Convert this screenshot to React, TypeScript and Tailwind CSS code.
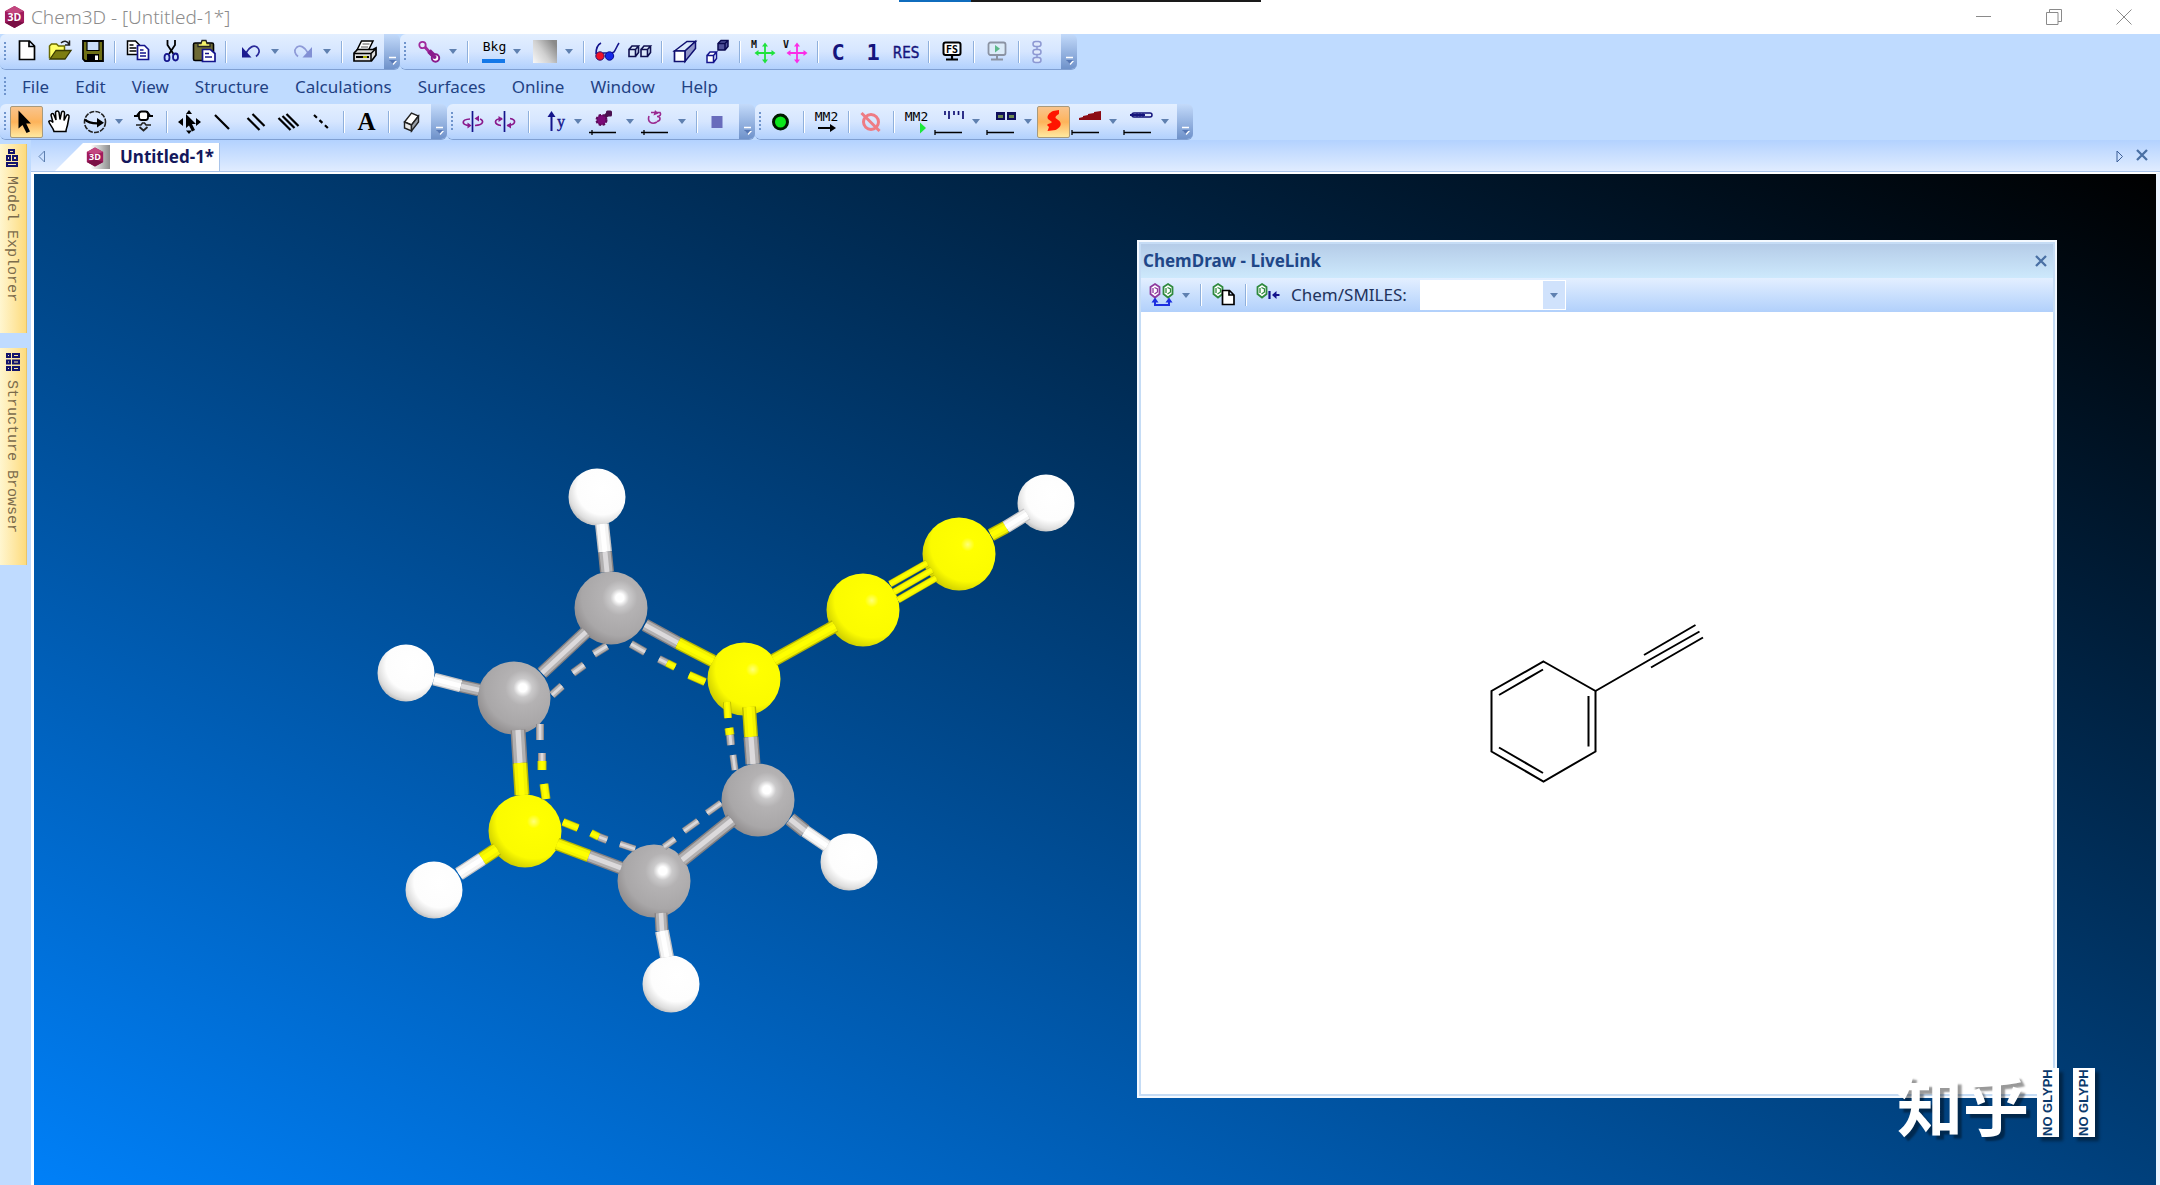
import type { ReactNode } from 'react';

type Point = [number, number];

const NAVY = '#14148c';
const PURPLE = '#8a1a8c';

/* ---------- Icon primitives ---------- */

function Ico({ children }: { children: ReactNode }) {
    return (
        <svg viewBox="0 0 24 24" className="h-6 w-6 shrink-0 overflow-visible" fill="none" aria-hidden="true">
            {children}
        </svg>
    );
}

function Logo({ className }: { className: string }) {
    return (
        <svg viewBox="0 0 22 24" className={className} aria-hidden="true">
            <path d="M11 0.5 21 6v12l-10 5.5L1 18V6z" fill="#a01a5c" />
            <path d="M11 0.5 21 6 11 9 1 6z" fill="#c2477f" />
            <path d="M1 18 11 15l10 3-10 5.5z" fill="#7a0f45" />
            <text x="11" y="16" textAnchor="middle" fontSize="11" fontWeight="700" fill="#fff" fontFamily="'Open Sans', sans-serif">
                3D
            </text>
        </svg>
    );
}

function Caret() {
    return (
        <svg viewBox="0 0 8 5" className="h-[5px] w-2 shrink-0" aria-hidden="true">
            <path d="M0 0h8L4 5z" fill="#5f80b0" />
        </svg>
    );
}

/** Thin scale line drawn under the popup slider icons */
function ScaleLine({ tick = -5 }: { tick?: number }) {
    return <path d={`M-5 22.5H22M${tick} 20v5`} stroke="#000" strokeWidth="1.3" />;
}

function Hexagon({ x, color }: { x: number; color: string }) {
    return (
        <g stroke={color}>
            <path d={`M${x} 1l4.5 3v7L${x} 14.5l-4.5-3.5V4z`} fill="#fff" strokeWidth="1.8" />
            <path d={`M${x - 2} 5v5M${x - 0.5} 11l3-2v-3l-3-1.5`} strokeWidth="1.3" />
        </g>
    );
}

/* ---------- Toolbar icons ---------- */

const icons: Record<string, ReactNode> = {
    New: <path d="M4.5 1h10l5 5v13.5h-15zM14 1v5.5h5.5" fill="#fff" stroke="#000" strokeWidth="1.7" />,
    Open: (
        <>
            <path d="M1.5 18.5V6l2-2h5l2 2h6v4" fill="#ffff66" stroke="#6b6b00" strokeWidth="1.5" />
            <path d="M2 19 8 10.5h15L17 19z" fill="#7d7d10" stroke="#3a3a00" strokeWidth="1.3" />
            <path d="M13 3c3-3 6-2 8 1M21.5 0.5V5H17" stroke="#222" strokeWidth="1.5" />
        </>
    ),
    Save: (
        <>
            <path d="M2 1h20v20H4l-2-2z" fill="#6f7015" stroke="#000" strokeWidth="1.8" />
            <path d="M6 1.5h12v9H6z" fill="#c9dcf7" stroke="#000" strokeWidth="1.2" />
            <path d="M6 14h12v7H6z" fill="#000" />
            <path d="M14 15.5h3v4.5h-3z" fill="#fff" />
        </>
    ),
    Copy: (
        <>
            <path d="M1.5 1h8l4 4v9.5h-12z" fill="#fff" stroke="#000" strokeWidth="1.5" />
            <path d="M3.5 5h4M3.5 8h7M3.5 11h7" stroke="#000" strokeWidth="1.4" />
            <path d="M11.5 5.5h7l4 4v10h-11z" fill="#fff" stroke={NAVY} strokeWidth="1.7" />
            <path d="M14 10h3.5M14 13h6M14 16h6" stroke={NAVY} strokeWidth="1.4" />
        </>
    ),
    Cut: (
        <>
            <path d="M8.5 0v5l6 9M16 0v5l-6 9" stroke="#000" strokeWidth="1.8" />
            <ellipse cx="8" cy="17.5" rx="2.5" ry="3.7" stroke={NAVY} strokeWidth="1.8" />
            <ellipse cx="16.5" cy="17" rx="2.5" ry="3.5" stroke={NAVY} strokeWidth="1.8" />
        </>
    ),
    Paste: (
        <>
            <rect x="1.5" y="3" width="20" height="17.5" rx="1.5" fill="#6d6a35" stroke="#000" strokeWidth="1.6" />
            <path d="M6 6.5V3.5h3l1-3h4l1 3h3v3z" fill="#f5f36b" stroke="#222" strokeWidth="1.3" />
            <path d="M10.5 9.5h8l4.5 4v8H10.5z" fill="#fff" stroke={NAVY} strokeWidth="1.7" />
            <path d="M13 13.5h4M13 17h7" stroke={NAVY} strokeWidth="1.5" />
        </>
    ),
    Undo: (
        <>
            <path d="M7 13C10 7 15 4.5 18.5 7.5c3 3 1.5 6.5-1.5 9" stroke="#2b2b9a" strokeWidth="1.7" />
            <path d="M3 7v10.5h9.5z" fill="#1c1c90" />
        </>
    ),
    Redo: (
        <>
            <path d="M17 13C14 7 9 4.5 5.5 7.5c-3 3-1.5 6.5 1.5 9" stroke="#8f9bd8" strokeWidth="1.7" />
            <path d="M21 7v10.5h-9.5z" fill="#8290d4" />
        </>
    ),
    Print: (
        <>
            <path d="M4 10 8.5 1H20l-4.5 9z" fill="#fff" stroke="#000" strokeWidth="1.5" />
            <path d="M9.5 4h7M8 7h7" stroke="#555" strokeWidth="1.2" />
            <path d="M1 13l3.5-3.5H20l3-1.5v7l-4.5 6H1z" fill="#ddd" stroke="#000" strokeWidth="1.7" />
            <path d="M1 13.5h17v7.5M18 13.5l5-5" stroke="#000" strokeWidth="1.5" />
            <path d="M3 17h13" stroke="#000" strokeWidth="2" />
            <path d="M10 17h4" stroke="#e8e800" strokeWidth="1.6" />
        </>
    ),
    'Display mode': (
        <>
            <path d="m7 6 9 10" stroke="#a02a9c" strokeWidth="3" />
            <path d="m12 11 7 7" stroke={PURPLE} strokeWidth="5" />
            <circle cx="5.5" cy="5" r="3.2" fill="#e6eefc" stroke="#a02a9c" strokeWidth="1.8" />
            <circle cx="18.5" cy="18" r="3.7" fill="#fff" stroke={PURPLE} strokeWidth="2" />
            <circle cx="17.5" cy="17" r="2" fill={PURPLE} />
        </>
    ),
    'Background color': (
        <>
            <text x="13.5" y="11" textAnchor="middle" fontSize="13" fill="#000" fontFamily="'DejaVu Sans Mono', monospace">
                Bkg
            </text>
            <rect x="1" y="19" width="23" height="4" fill="#1478e8" />
        </>
    ),
    'Background effect': (
        <>
            <defs>
                <linearGradient id="effect" x1="0" y1="1" x2="1" y2="0.3">
                    <stop offset="0" stopColor="#f8f8f8" />
                    <stop offset="0.5" stopColor="#d0d0d0" />
                    <stop offset="1" stopColor="#8a8a8a" />
                </linearGradient>
            </defs>
            <rect width="24" height="23" fill="url(#effect)" />
        </>
    ),
    'Red and blue stereo': (
        <>
            <path d="M1 14C1 8 2 5 6 3M15 14l4-2c2-3 3-6 5-9" stroke={NAVY} strokeWidth="1.6" />
            <path d="M8 13h4" stroke={NAVY} strokeWidth="1.5" />
            <circle cx="5" cy="16" r="4.2" fill="#f01028" stroke="#30106c" />
            <circle cx="14.5" cy="16" r="4.2" fill="#1428e8" stroke="#0a0a90" />
        </>
    ),
    'Stereo pairs': (
        <>
            {[0, 12].map((dx) => (
                <path
                    key={dx}
                    d={`M${dx + 1} 9.5h6.5v7H${dx + 1}zM${dx + 1} 9.5l3-3.5h6.5l-3 3.5M${dx + 10.5} 6v6.5l-3 4`}
                    fill="#dbe8fb"
                    stroke="#101050"
                    strokeWidth="1.6"
                />
            ))}
        </>
    ),
    Perspective: (
        <>
            <path d="M1.5 11 14 1.5h8.5L12 11z" fill="#dbe8fb" stroke="#101070" strokeWidth="1.5" />
            <path d="M12 11 22.5 1.5v7L12 21.5z" fill="#8f94c8" stroke="#101070" strokeWidth="1.5" />
            <path d="M1.5 11H12v10.5H1.5z" fill="#fff" stroke="#101070" strokeWidth="1.7" />
        </>
    ),
    'Depth fading': (
        <>
            <path d="M12 3.5 15 0.5h7v6L19 10h-7z" fill="#50529a" stroke="#0a0a50" strokeWidth="1.5" />
            <path d="M12 3.5h7V10M19 3.5l3-3" stroke="#0a0a50" strokeWidth="1.5" />
            <path d="M1 15.5h6.5v7H1zM1 15.5l3-3.5h6.5l-3 3.5M10.5 12v6.5l-3 4" fill="#fff" stroke={NAVY} strokeWidth="1.5" />
        </>
    ),
    'Model axes': (
        <>
            <text x="0" y="7.5" fontSize="10" fontWeight="700" fill="#111" fontFamily="'DejaVu Sans Mono', monospace">
                M
            </text>
            <path d="M14 4v18M5 13h18" stroke="#1fe23c" strokeWidth="1.8" />
            <path d="M14 2.5l3 4h-6zM14 23.5l3-4h-6zM3.5 13l4-3v6zM24.5 13l-4-3v6z" fill="#1fe23c" />
        </>
    ),
    'View axes': (
        <>
            <text x="-1" y="7.5" fontSize="10" fontWeight="700" fill="#111" fontFamily="'DejaVu Sans Mono', monospace">
                V
            </text>
            <path d="M13 4v18M4 13h18" stroke="#fb2ce6" strokeWidth="1.8" />
            <path d="M13 2.5l3 4h-6zM13 23.5l3-4h-6zM2.5 13l4-3v6zM23.5 13l-4-3v6z" fill="#fb2ce6" />
        </>
    ),
    'Element symbols': (
        <text x="9" y="20" textAnchor="middle" fontSize="22" fontWeight="700" fill="#14147c" fontFamily="'DejaVu Sans Mono', monospace">
            C
        </text>
    ),
    'Serial numbers': (
        <text x="11" y="20" textAnchor="middle" fontSize="22" fontWeight="700" fill="#14147c" fontFamily="'DejaVu Sans Mono', monospace">
            1
        </text>
    ),
    'Residue labels': (
        <text x="11" y="18" textAnchor="middle" fontSize="15" fill="#14147c" stroke="#14147c" strokeWidth="0.4" fontFamily="'Liberation Sans Narrow', 'DejaVu Sans Condensed', sans-serif">
            RES
        </text>
    ),
    'Full screen': (
        <>
            <rect x="3.5" y="2.5" width="17" height="12.5" rx="2" fill="#fff" stroke="#000" strokeWidth="2" />
            <path d="M12 15v4M6 19.5h12" stroke="#000" strokeWidth="2.2" />
            <text x="12" y="12.5" textAnchor="middle" fontSize="10" fontWeight="700" fill="#000" fontFamily="'DejaVu Sans Mono', monospace">
                FS
            </text>
        </>
    ),
    Demo: (
        <>
            <rect x="3.5" y="2.5" width="17" height="12.5" rx="2" fill="#dcebf8" stroke="#8b93a3" strokeWidth="1.8" />
            <path d="M12 15v4M6 19.5h12" stroke="#8b93a3" strokeWidth="2" />
            <path d="M10 5v7.5l5-3.7z" fill="#5cb888" />
        </>
    ),
    Chain: (
        <g stroke="#8d98d2" strokeWidth="1.5" fill="#dfe9fb">
            <rect x="3" y="1.5" width="8" height="5" rx="2.5" />
            <rect x="3" y="9.5" width="8" height="5" rx="2.5" />
            <rect x="3" y="17.5" width="8" height="5" rx="2.5" />
            <path d="M7 6.5v3M7 14.5v3" />
        </g>
    ),
    Select: <path d="M3.500 0.5v18l4-3.5 4 8 3.5-1.5-3.800-8H16z" fill="#000" />,
    Translate: (
        <path
            d="M6 21.5C5 17 1 14 0.8 11.5c1-1.5 3-.5 4.2 1L3 5c.5-2 2.5-2 3 0l2 5-.5-7.5c.5-2 3-2 3.5 0l1 7 1.5-7c.5-2 3-1.5 3 .5l-.5 7.5 2.5-5c1-1.5 3-.5 2.5 1.5l-1.5 8c-.5 2.5-1.5 4-1.5 6.5z"
            fill="#fff"
            stroke="#000"
            strokeWidth="1.5"
        />
    ),
    Rotate: (
        <>
            <circle cx="12" cy="12" r="10.5" stroke="#222" strokeWidth="1.6" strokeDasharray="5 1.2" />
            <path d="M2 9.5c3 3.5 8 4 14 3.8" stroke="#000" strokeWidth="2.4" />
            <path d="M14 8l7 4.8-7 4.7z" fill="#000" />
        </>
    ),
    Zoom: (
        <>
            <path d="M1 6h5M15 6h5" stroke="#000" strokeWidth="2" />
            <path d="M4 5 7.5 1.5M17 5 13.5 1.5" stroke="#000" strokeWidth="1.6" />
            <rect x="6" y="1.5" width="9" height="8.5" rx="2.5" fill="#fff" stroke="#000" strokeWidth="1.8" />
            <path d="M3 15h5l1.500-2h2l1.500 2h5" stroke="#222" strokeWidth="1.6" />
            <path d="M6.500 17l4 3.500 4-3.500" stroke="#222" strokeWidth="1.8" />
        </>
    ),
    Move: (
        <>
            <path d="M8 4v14l3-2.5 3 6 3-1.5-3-6h4z" fill="#000" />
            <path d="M11 0l3 4H8zM0 12l5-4v8zM23 12l-5-4v8zM11 24l3-3.5H8z" fill="#000" />
        </>
    ),
    'Single bond': <path d="m4 5 14 14" stroke="#000" strokeWidth="2.2" />,
    'Double bond': <path d="m3.500 8 12 12M8.500 4l12 12" stroke="#000" strokeWidth="2.2" />,
    'Triple bond': <path d="m1.500 8 12 12M5.500 6l12 12M9.500 4l12 12" stroke="#000" strokeWidth="2.2" />,
    'Uncoordinated bond': <path d="m4 5 16 15" stroke="#000" strokeWidth="2.2" strokeDasharray="4 3.5" />,
    'Build from text': (
        <text x="11.5" y="20" textAnchor="middle" fontSize="25" fontWeight="700" fill="#000" fontFamily="'Liberation Serif', serif">
            A
        </text>
    ),
    Eraser: (
        <>
            <path d="m4.500 12 7-9 7 3-7 9z" fill="#fff" stroke="#222" strokeWidth="1.4" />
            <path d="m4.500 12 7 3v6l-7-3z" fill="#e8e8e8" stroke="#222" strokeWidth="1.4" />
            <path d="m11.500 15 7-9v6l-7 9z" fill="#9aa0a8" stroke="#222" strokeWidth="1.4" />
        </>
    ),
    'Spin about Y': (
        <>
            <path d="M10.5 1v21" stroke={NAVY} strokeWidth="1.7" />
            <path d="M8 9c-9 .5-9 6 0 6.5M13 15.5c9-.5 9-5 5-6.5" stroke={PURPLE} strokeWidth="1.7" />
            <path d="M17 5.5v6l-4.5-3z" fill={PURPLE} />
            <path d="M5.5 12.5v6l4-3z" fill={PURPLE} />
        </>
    ),
    'Spin selected': (
        <>
            <path d="M9.5 1v21" stroke={NAVY} strokeWidth="1.7" />
            <path d="M7 8.5c-9 .5-8 6-1 7M12 15.5c10-.5 9-6 3-7" stroke={PURPLE} strokeWidth="1.7" />
            <path d="M3.5 6v6l4.5-3z" fill={PURPLE} />
            <path d="M16 12.5v6l-4.5-3z" fill={PURPLE} />
        </>
    ),
    'Rotate about axis': (
        <>
            <path d="M9.5 4v17" stroke={NAVY} strokeWidth="2" />
            <path d="M9.5 1l4 6h-8z" fill={NAVY} />
            <text x="15" y="17" fontSize="16" fill={NAVY} stroke={NAVY} strokeWidth="0.4" fontFamily="'Liberation Serif', serif">
                y
            </text>
        </>
    ),
    'Sphere size': (
        <>
            <path d="m7 10 8-7" stroke="#4a104c" strokeWidth="4" />
            <rect x="12" y="0.5" width="6" height="6" rx="1.5" fill="#4a1050" />
            <circle cx="7.5" cy="10" r="5" fill="#7a0a78" stroke="#5a0a58" strokeWidth="2" strokeDasharray="2.5 1.5" />
            <ScaleLine tick={-2} />
        </>
    ),
    'Dihedral speed': (
        <>
            <path d="M3 6c-2 6 3 9 8 6" stroke="#9a2a90" strokeWidth="1.6" />
            <path d="M5 2.500h9c1.500 2 0 4-3 4 4 0 4 4 0 5" stroke="#9a2a90" strokeWidth="1.6" />
            <path d="m9 0-1.500 5.500 5-2z" fill="#9a2a90" />
            <ScaleLine tick={-2} />
        </>
    ),
    Stop: <rect x="3.5" y="6" width="11" height="12" fill="#686cbc" />,
    Record: <circle cx="10.5" cy="12" r="7" fill="#0ce81c" stroke="#001a00" strokeWidth="3" />,
    'Minimize energy': (
        <>
            <text x="11.5" y="10.5" textAnchor="middle" fontSize="13" fill="#000" fontFamily="'DejaVu Sans Mono', monospace">
                MM2
            </text>
            <path d="M3 18h14" stroke="#000" strokeWidth="2" />
            <path d="M15 14l6 4-6 4z" fill="#000" />
        </>
    ),
    'Stop calculation': (
        <>
            <circle cx="11" cy="12" r="7.5" stroke="#ee7c84" strokeWidth="3" />
            <path d="m1.5 3 18 18" stroke="#ee7c84" strokeWidth="3" />
        </>
    ),
    'Run dynamics': (
        <>
            <text x="11.5" y="10.5" textAnchor="middle" fontSize="13" fill="#000" fontFamily="'DejaVu Sans Mono', monospace">
                MM2
            </text>
            <path d="M15 12.5v11l6-5.5z" fill="#1be83a" />
        </>
    ),
    'Frame interval': (
        <>
            <path d="M5 1v4M9 1v8M14 1v4M18.5 1v4M23 1v8" stroke="#101074" strokeWidth="1.7" />
            <ScaleLine />
        </>
    ),
    'Movie frames': (
        <>
            <path d="M4 2h9v8H4zM15 2h9v8h-9z" fill="#10105c" />
            <path d="M6 5h5v3H6zM17 5h5v3h-5z" fill="#6e8a50" />
            <ScaleLine />
        </>
    ),
    'Heating mode': (
        <path
            d="M17 0 11 1C7 3 4.5 6 6 9l4 3c-1 1.5-4 1.5-5 3l2 2-1.5 4 8-1c4-2 7-5 4-9l-4-3c0-3 3-3 3.5-4.5z"
            fill="#ff1400"
        />
    ),
    'Heating rate': (
        <>
            <path d="M2 10V8l4-1V6l5-1V4l6-1V2l7-1v9z" fill="#8c0c14" />
            <ScaleLine />
        </>
    ),
    Temperature: (
        <>
            <rect x="3" y="3" width="20" height="4" rx="2" fill="#dfe9fb" stroke="#14147c" strokeWidth="1.5" />
            <path d="M1 5h15" stroke="#14147c" strokeWidth="2.2" />
            <path d="M8 3v4M11 3v4M14 3v4" stroke="#14147c" />
            <ScaleLine />
        </>
    ),
    'Link mode': (
        <>
            <Hexagon x={5} color="#8e3a9e" />
            <Hexagon x={18} color="#2f8a3e" />
            <path d="M5 17v5h14v-5" stroke="#1c2ee0" strokeWidth="2" />
            <path d="M5 14.5l3.5 5h-7zM19 14.5l3.5 5h-7z" fill="#1c2ee0" />
        </>
    ),
    'Copy to ChemDraw': (
        <>
            <Hexagon x={6} color="#2f8a3e" />
            <path d="M10.5 7.5h7l4.5 4.5v9.5H10.5zM17 7.5V12h5" fill="#fff" stroke="#000" strokeWidth="1.7" />
        </>
    ),
    'Add to Chem3D': (
        <>
            <Hexagon x={5} color="#2f8a3e" />
            <path d="M12.5 8v8M16 12h6.5" stroke="#14148c" strokeWidth="2.2" />
            <path d="M19.5 8v8L15 12z" fill="#14148c" />
        </>
    ),
};

/* ---------- Toolbars ---------- */

/** '|' is a separator */
type Item = '|' | { name: string; menu?: boolean; pressed?: boolean };

const b = (name: string): Item => ({ name });
const m = (name: string): Item => ({ name, menu: true });
const p = (name: string): Item => ({ name, pressed: true });

const standardBar: Item[] = [
    b('New'), b('Open'), b('Save'), '|', b('Copy'), b('Cut'), b('Paste'), '|', m('Undo'), m('Redo'), '|', b('Print'),
];
const displayBar: Item[] = [
    m('Display mode'), '|', m('Background color'), m('Background effect'), '|', b('Red and blue stereo'), b('Stereo pairs'), '|',
    b('Perspective'), b('Depth fading'), '|', b('Model axes'), b('View axes'), '|', b('Element symbols'), b('Serial numbers'),
    b('Residue labels'), '|', b('Full screen'), '|', b('Demo'), '|', b('Chain'),
];
const buildingBar: Item[] = [
    p('Select'), b('Translate'), m('Rotate'), b('Zoom'), '|', b('Move'), b('Single bond'), b('Double bond'), b('Triple bond'),
    b('Uncoordinated bond'), '|', b('Build from text'), '|', b('Eraser'),
];
const demoBar: Item[] = [
    b('Spin about Y'), b('Spin selected'), '|', m('Rotate about axis'), m('Sphere size'), m('Dihedral speed'), '|', b('Stop'),
];
const calculationBar: Item[] = [
    b('Record'), '|', b('Minimize energy'), '|', b('Stop calculation'), '|', b('Run dynamics'), m('Frame interval'),
    m('Movie frames'), p('Heating mode'), m('Heating rate'), m('Temperature'),
];

const menus = ['File', 'Edit', 'View', 'Structure', 'Calculations', 'Surfaces', 'Online', 'Window', 'Help'];

function Grip() {
    return <span className="mx-1 h-5 w-0.5 shrink-0 bg-[repeating-linear-gradient(#6f94cc_0_2px,transparent_2px_4px)]" />;
}

function ToolItem({ item }: { item: Item }) {
    if (item === '|') {
        return <span className="mx-[5px] h-[22px] w-0.5 shrink-0 border-r border-l border-r-white border-l-[#8fb0dc]" />;
    }
    if (item.menu) {
        return (
            <button type="button" aria-label={item.name} className="flex h-8 w-[52px] shrink-0 items-center gap-2 pl-[7px]">
                <Ico>{icons[item.name]}</Ico>
                <Caret />
            </button>
        );
    }
    return (
        <button
            type="button"
            aria-label={item.name}
            className={
                item.pressed
                    ? 'flex h-8 w-[33px] shrink-0 items-center justify-center rounded-[2px] border border-[#a89a7c] bg-linear-to-b from-[#f9c48c] via-[#fdb35a] to-[#fee9a0]'
                    : 'flex h-8 w-[33px] shrink-0 items-center justify-center'
            }
        >
            <Ico>{icons[item.name]}</Ico>
        </button>
    );
}

function Toolbar({ label, items }: { label: string; items: Item[] }) {
    return (
        <div role="toolbar" aria-label={label} className="flex h-9 overflow-hidden rounded-md border-b border-[#7f9fd2]">
            <div className="flex items-center bg-linear-to-b from-[#e3efff] via-[#d6e6ff] to-[#b1d0fd] pr-[3px]">
                <Grip />
                {items.map((item, i) => (
                    <ToolItem key={i} item={item} />
                ))}
            </div>
            <button
                type="button"
                aria-label={`${label} options`}
                className="flex w-4 shrink-0 items-end justify-center bg-linear-to-b from-[#c3dafa] to-[#6f92ca] pb-1"
            >
                <svg viewBox="0 0 9 9" className="h-[9px] w-[9px]" aria-hidden="true">
                    <path d="M1 1.5h7" stroke="#fff" strokeWidth="1.5" />
                    <path d="M2 5h7L5.5 9z" fill="#fff" />
                    <path d="M1 4h7L4.5 8z" fill="#5577b5" />
                </svg>
            </button>
        </div>
    );
}

/* ---------- Molecule ---------- */

type Element = 'carbon' | 'picked' | 'hydrogen';

const shades: Record<Element, [string, string, string]> = {
    carbon: ['#858182', '#b2b0b1', '#dcdadc'],
    picked: ['#b9b900', '#f4f400', '#ffff00'],
    hydrogen: ['#c4c4c6', '#f4f4f4', '#ffffff'],
};

const atoms: { at: Point; kind: Element }[] = [
    { at: [597, 497], kind: 'hydrogen' },
    { at: [406, 673], kind: 'hydrogen' },
    { at: [434, 890], kind: 'hydrogen' },
    { at: [671, 984], kind: 'hydrogen' },
    { at: [849, 862], kind: 'hydrogen' },
    { at: [1046, 503], kind: 'hydrogen' },
    { at: [611, 608], kind: 'carbon' },
    { at: [514, 698], kind: 'carbon' },
    { at: [654, 881], kind: 'carbon' },
    { at: [758, 800], kind: 'carbon' },
    { at: [525, 831], kind: 'picked' },
    { at: [744, 679], kind: 'picked' },
    { at: [863, 610], kind: 'picked' },
    { at: [959, 554], kind: 'picked' },
];

const bonds: { from: Point; to: Point; kind: Element; width: number }[] = [
    { from: [602, 524], to: [605, 552], kind: 'hydrogen', width: 14 },
    { from: [605, 552], to: [607, 572], kind: 'carbon', width: 14 },
    { from: [645, 625], to: [678, 643], kind: 'carbon', width: 13 },
    { from: [678, 643], to: [713, 661], kind: 'picked', width: 13 },
    { from: [586, 632], to: [542, 673], kind: 'carbon', width: 13 },
    { from: [434, 679], to: [461, 686], kind: 'hydrogen', width: 13 },
    { from: [461, 686], to: [479, 690], kind: 'carbon', width: 13 },
    { from: [518, 730], to: [520, 763], kind: 'carbon', width: 15 },
    { from: [520, 763], to: [522, 795], kind: 'picked', width: 15 },
    { from: [497, 849], to: [482, 859], kind: 'picked', width: 14 },
    { from: [482, 859], to: [459, 874], kind: 'hydrogen', width: 14 },
    { from: [557, 844], to: [589, 856], kind: 'picked', width: 13 },
    { from: [589, 856], to: [621, 868], kind: 'carbon', width: 13 },
    { from: [661, 913], to: [662, 931], kind: 'carbon', width: 13 },
    { from: [662, 931], to: [667, 957], kind: 'hydrogen', width: 14 },
    { from: [682, 860], to: [732, 820], kind: 'carbon', width: 14 },
    { from: [749, 707], to: [751, 737], kind: 'picked', width: 14 },
    { from: [751, 737], to: [753, 764], kind: 'carbon', width: 15 },
    { from: [790, 819], to: [805, 831], kind: 'carbon', width: 14 },
    { from: [805, 831], to: [827, 846], kind: 'hydrogen', width: 13 },
    { from: [774, 660], to: [835, 626], kind: 'picked', width: 13 },
    { from: [890, 584], to: [927, 563], kind: 'picked', width: 7 },
    { from: [894, 592], to: [932, 570], kind: 'picked', width: 7 },
    { from: [898, 600], to: [936, 578], kind: 'picked', width: 7 },
    { from: [991, 535], to: [1006, 527], kind: 'picked', width: 13 },
    { from: [1006, 527], to: [1027, 514], kind: 'hydrogen', width: 13 },
    // inner aromatic dashes
    { from: [607, 646], to: [594, 654], kind: 'carbon', width: 8 },
    { from: [584, 665], to: [573, 673], kind: 'carbon', width: 8 },
    { from: [562, 686], to: [552, 695], kind: 'carbon', width: 8 },
    { from: [631, 644], to: [645, 652], kind: 'carbon', width: 8 },
    { from: [659, 659], to: [667, 663], kind: 'carbon', width: 8 },
    { from: [667, 663], to: [675, 667], kind: 'picked', width: 8 },
    { from: [689, 675], to: [705, 682], kind: 'picked', width: 8 },
    { from: [540, 724], to: [540, 740], kind: 'carbon', width: 8 },
    { from: [542, 753], to: [542, 761], kind: 'carbon', width: 8 },
    { from: [542, 761], to: [542, 770], kind: 'picked', width: 9 },
    { from: [544, 784], to: [546, 799], kind: 'picked', width: 9 },
    { from: [563, 822], to: [578, 828], kind: 'picked', width: 8 },
    { from: [591, 833], to: [599, 837], kind: 'picked', width: 8 },
    { from: [599, 837], to: [607, 840], kind: 'carbon', width: 8 },
    { from: [620, 844], to: [635, 849], kind: 'carbon', width: 7 },
    { from: [675, 839], to: [664, 847], kind: 'carbon', width: 7 },
    { from: [698, 821], to: [684, 831], kind: 'carbon', width: 7 },
    { from: [721, 803], to: [707, 813], kind: 'carbon', width: 7 },
    { from: [727, 702], to: [728, 718], kind: 'picked', width: 8 },
    { from: [729, 728], to: [730, 735], kind: 'picked', width: 9 },
    { from: [730, 735], to: [731, 745], kind: 'carbon', width: 8 },
    { from: [733, 755], to: [735, 770], kind: 'carbon', width: 7 },
];

/** Cylinder shaded across its width: dark rim, body, highlight */
function Bond({ from, to, kind, width }: { from: Point; to: Point; kind: Element; width: number }) {
    const [dark, body, light] = shades[kind];
    const line = { x1: from[0], y1: from[1], x2: to[0], y2: to[1] };
    return (
        <g>
            <line {...line} stroke={dark} strokeWidth={width} />
            <line {...line} stroke={body} strokeWidth={width * 0.8} />
            <line {...line} stroke={light} strokeWidth={width * 0.35} />
        </g>
    );
}

function Molecule() {
    return (
        <svg viewBox="34 174 1100 1000" className="absolute top-0 left-0 h-[1000px] w-[1100px]" role="img" aria-label="Ball and stick model">
            <defs>
                <radialGradient id="carbon" cx="0.62" cy="0.36" r="0.8">
                    <stop offset="0" stopColor="#ffffff" />
                    <stop offset="0.07" stopColor="#ffffff" />
                    <stop offset="0.16" stopColor="#cbcacb" />
                    <stop offset="0.3" stopColor="#b4b2b3" />
                    <stop offset="0.65" stopColor="#a9a7a8" />
                    <stop offset="0.85" stopColor="#908d8e" />
                    <stop offset="1" stopColor="#666262" />
                </radialGradient>
                <radialGradient id="picked" cx="0.62" cy="0.37" r="0.78">
                    <stop offset="0" stopColor="#ffff78" />
                    <stop offset="0.12" stopColor="#ffff00" />
                    <stop offset="0.65" stopColor="#fbfb00" />
                    <stop offset="0.85" stopColor="#d0d000" />
                    <stop offset="1" stopColor="#8a8a00" />
                </radialGradient>
                <radialGradient id="hydrogen" cx="0.6" cy="0.36" r="0.75">
                    <stop offset="0" stopColor="#ffffff" />
                    <stop offset="0.6" stopColor="#fdfdfd" />
                    <stop offset="0.8" stopColor="#dedede" />
                    <stop offset="1" stopColor="#9c9c9c" />
                </radialGradient>
            </defs>
            {atoms.map(({ at, kind }) => (
                <circle key={at.join()} cx={at[0]} cy={at[1]} r={kind === 'hydrogen' ? 28.5 : 36.5} fill={`url(#${kind})`} />
            ))}
            {bonds.map((bond, i) => (
                <Bond key={i} {...bond} />
            ))}
        </svg>
    );
}

/* ---------- LiveLink window ---------- */

function Phenylacetylene() {
    return (
        <svg viewBox="1460 600 280 200" className="mt-72 ml-[319px] h-[200px] w-[280px]" role="img" aria-label="Structure drawing">
            <g stroke="#000" strokeWidth="2" fill="none">
                <path d="M1543.5 661.5 1595.5 691v60.5l-52 30-52-30V691z" />
                <path d="M1499 695l44-25.5M1499 747.5l44 25.5M1588.5 696v50.5" />
                <path d="M1595.5 691l52-30 52-29.5M1644 655l51.5-30M1651 667.5l52-30" />
            </g>
        </svg>
    );
}

function CloseCross() {
    return (
        <svg viewBox="0 0 12 12" className="h-3 w-3" aria-hidden="true">
            <path d="M1 1l10 10M11 1 1 11" stroke="#4a70a4" strokeWidth="2.3" />
        </svg>
    );
}

function LiveLink() {
    return (
        <section
            aria-label="ChemDraw - LiveLink"
            className="absolute top-[66px] right-[99px] flex h-[858px] w-[920px] flex-col border-2 border-[#f4f9ff] bg-[#c5dcf5] p-0.5"
        >
            <header className="flex h-[34px] shrink-0 items-center justify-between bg-linear-to-b from-[#b5cce8] to-[#cde9fc] pr-1.5 pl-0.5">
                <h2 className="text-[17px] leading-5 font-bold text-[#1f4788]">ChemDraw - LiveLink</h2>
                <button type="button" aria-label="Close LiveLink">
                    <CloseCross />
                </button>
            </header>
            <div className="flex h-[34px] shrink-0 items-center bg-linear-to-b from-[#e3efff] to-[#b1d0fb] pl-0.5">
                <ToolItem item={m('Link mode')} />
                <ToolItem item="|" />
                <ToolItem item={b('Copy to ChemDraw')} />
                <ToolItem item="|" />
                <ToolItem item={b('Add to Chem3D')} />
                <label htmlFor="smiles" className="ml-1.5 w-[129px] text-[17px] leading-5 text-[#22335c]">
                    Chem/SMILES:
                </label>
                <div className="flex h-[30px] border border-white bg-white">
                    <input id="smiles" type="text" className="w-[122px] bg-white px-1 text-[17px] outline-none" />
                    <button type="button" aria-label="Recent SMILES" className="flex w-[22px] items-center justify-center bg-[#d0e2fc]">
                        <Caret />
                    </button>
                </div>
            </div>
            <div className="flex-1 bg-white">
                <Phenylacetylene />
            </div>
        </section>
    );
}

/* ---------- Page ---------- */

function Watermark() {
    return (
        <div className="absolute right-[61px] bottom-[45px] flex items-center gap-[14px] text-white">
            <span className="w-[126px] font-['Noto_Sans_CJK_SC',sans-serif] text-[66px] leading-[76px] font-bold whitespace-nowrap [text-shadow:4px_4px_2px_rgb(0_0_0/0.4)]">
                知乎
            </span>
            {[0, 1].map((i) => (
                <span
                    key={i}
                    className="flex h-[69px] w-[22px] rotate-180 items-center justify-center bg-white font-['Liberation_Sans',sans-serif] text-[13px] leading-[22px] font-bold whitespace-nowrap text-[#0c3a6c] shadow-[-4px_-4px_3px_rgb(0_0_0/0.4)] [writing-mode:vertical-rl]"
                >
                    NO GLYPH
                </span>
            ))}
        </div>
    );
}

function TitleBar() {
    return (
        <header className="relative flex h-[34px] shrink-0 items-center bg-white pr-px pl-1">
            <div className="absolute top-0 left-1/2 flex h-0.5 w-[362px] -translate-x-1/2 bg-[#1a1a1a]">
                <span className="w-[72px] bg-[#0f6cbd]" />
            </div>
            <Logo className="h-6 w-[21px]" />
            <h1 className="ml-1.5 text-[19px] leading-6 font-light text-[#8c8c8c]">Chem3D - [Untitled-1*]</h1>
            <div className="ml-auto flex text-[#8a8a8a]">
                <button type="button" aria-label="Minimize" className="flex h-[34px] w-[70px] items-center justify-center">
                    <svg viewBox="0 0 16 16" className="h-4 w-4"><path d="M0 7.5h15" stroke="currentColor" /></svg>
                </button>
                <button type="button" aria-label="Restore" className="flex h-[34px] w-[70px] items-center justify-center">
                    <svg viewBox="0 0 16 16" className="h-4 w-4" fill="none">
                        <path d="M0.5 3.5h11.5v12H0.5zM3.5 3.5v-3h12v12H12" stroke="currentColor" />
                    </svg>
                </button>
                <button type="button" aria-label="Close" className="flex h-[34px] w-[70px] items-center justify-center">
                    <svg viewBox="0 0 16 16" className="h-4 w-4"><path d="M0.5 0.5l15 15M15.5 0.5l-15 15" stroke="currentColor" /></svg>
                </button>
            </div>
        </header>
    );
}

function SideTab({ label, className, children }: { label: string; className: string; children: ReactNode }) {
    return (
        <button
            type="button"
            className={`flex w-[27px] flex-col items-start gap-2 border-r border-[#e9c46a] bg-linear-to-r from-[#fff6cf] to-[#fddb7c] pt-1 pl-0.5 ${className}`}
        >
            <svg viewBox="0 0 14 20" className="ml-1 h-5 w-[14px]" fill="none" stroke="#14146c" strokeWidth="2" aria-hidden="true">
                {children}
            </svg>
            <span className="font-['Liberation_Mono',monospace] text-[15px] leading-[18px] whitespace-nowrap text-[#7b6b4b] [writing-mode:vertical-rl]">
                {label}
            </span>
        </button>
    );
}

export default function App() {
    return (
        <div className="flex h-screen flex-col overflow-hidden bg-[#bfdbff] font-['Noto_Sans',sans-serif]">
            <TitleBar />

            <div className="flex h-9 shrink-0">
                <Toolbar label="Standard" items={standardBar} />
                <Toolbar label="Model display" items={displayBar} />
            </div>
            <nav className="flex h-[34px] shrink-0 items-center">
                <Grip />
                {menus.map((menu) => (
                    <button key={menu} type="button" className="px-[13px] text-[17px] leading-6 text-[#1f4284] first-of-type:pl-3">
                        {menu}
                    </button>
                ))}
            </nav>
            <div className="flex h-9 shrink-0">
                <Toolbar label="Building" items={buildingBar} />
                <Toolbar label="Demo" items={demoBar} />
                <Toolbar label="Calculation" items={calculationBar} />
            </div>

            <div className="flex min-h-0 flex-1">
                <aside className="flex w-[31px] shrink-0 flex-col gap-[15px] pt-1">
                    <SideTab label="Model Explorer" className="h-[189px]">
                        <path d="M3 2h5v3H3zM1 8h3v4H1zM7 8h4v4H7zM1 15h10v3H1z" />
                    </SideTab>
                    <SideTab label="Structure Browser" className="h-[217px]">
                        <path d="M1 2h3v3H1zM7 2h6v3H7zM1 8.5h3v3H1zM7 8.5h6v3H7zM1 15h3v3H1zM7 15h6v3H7z" />
                    </SideTab>
                </aside>

                <main className="flex min-w-0 flex-1 flex-col">
                    <div className="flex h-8 shrink-0 items-end border-b border-[#a9c4ea] bg-linear-to-b from-[#b3d2ff] to-[#e0ecff]">
                        <button type="button" aria-label="Scroll tabs left" className="mb-2 ml-[7px]">
                            <svg viewBox="0 0 7 13" className="h-[13px] w-[7px]" fill="none">
                                <path d="M6.5 1v11L1 6.5z" stroke="#5d7fb0" />
                            </svg>
                        </button>
                        <span className="ml-2.5 h-7 w-7 bg-white [clip-path:polygon(100%_0,0_100%,100%_100%)]" />
                        <button type="button" className="flex h-7 items-center gap-2.5 border-r border-[#a9c4ea] bg-white pr-[5px] pl-[3px] text-[17px] leading-6 font-bold text-[#14185c]">
                            <span className="flex h-6 w-6 items-center bg-linear-to-r from-white from-20% to-[#8c8c8c]">
                                <Logo className="h-5 w-[18px]" />
                            </span>
                            Untitled-1*
                        </button>
                        <button type="button" aria-label="Scroll tabs right" className="mb-2 ml-auto">
                            <svg viewBox="0 0 7 13" className="h-[13px] w-[7px]" fill="none">
                                <path d="M1 1v11l5.5-5.5z" stroke="#3d5f98" />
                            </svg>
                        </button>
                        <button type="button" aria-label="Close document" className="mr-3 mb-2.5 ml-[13px]">
                            <CloseCross />
                        </button>
                    </div>
                    <div className="relative flex-1 overflow-hidden border-t-2 border-r-4 border-l-[3px] border-white border-r-[#eaf3ff] bg-[linear-gradient(to_top_right,#0080f8,#000)]">
                        <Molecule />
                        <LiveLink />
                        <Watermark />
                    </div>
                </main>
            </div>
        </div>
    );
}
